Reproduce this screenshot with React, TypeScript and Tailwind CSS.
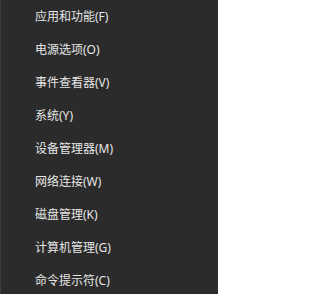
const items = [
  "应用和功能(F)",
  "电源选项(O)",
  "事件查看器(V)",
  "系统(Y)",
  "设备管理器(M)",
  "网络连接(W)",
  "磁盘管理(K)",
  "计算机管理(G)",
  "命令提示符(C)",
];

export default function App() {
  return (
    <div className="h-[294px] w-[218px] overflow-hidden border-l border-[#3c3c3c] bg-[#2b2b2b] font-['Noto_Sans','Noto_Sans_CJK_SC',sans-serif]">
      <ul className="flex flex-col">
        {items.map((label) => (
          <li
            key={label}
            className="flex h-[33px] items-center pl-[34px] text-[12px] leading-none text-[#e6e6e6]"
          >
            {label}
          </li>
        ))}
      </ul>
    </div>
  );
}
